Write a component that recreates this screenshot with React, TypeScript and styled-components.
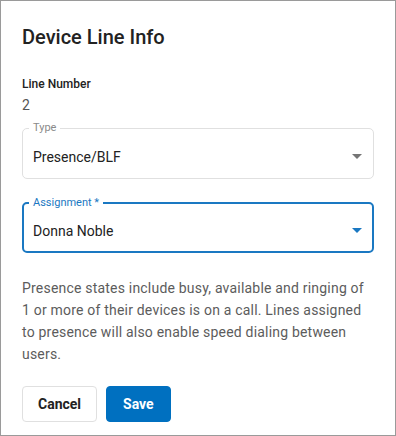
import React from 'react';
import styled, {createGlobalStyle} from "styled-components";

const GlobalStyle = createGlobalStyle`
  * {
    box-sizing: border-box;
  }
  body {
    margin: 0;
    font-family: Roboto, "Liberation Sans", sans-serif;
    background: #fff;
  }
`

const Caret = ({color}: {color: string}) => (
    <svg width="10" height="5" viewBox="0 0 10 5">
        <path d="M0 0 L10 0 L5 5 Z" fill={color}/>
    </svg>
);

type SelectProps = {
    label: string;
    value: string;
    focused?: boolean;
}

const SelectField = ({label, value, focused}: SelectProps) => {
    return (
        <Field $focused={focused}>
            <FieldLabel $focused={focused}>{label}</FieldLabel>
            <FieldValue>{value}</FieldValue>
            <Caret color={focused ? "#1a78c2" : "#757575"}/>
        </Field>
    );
};

export default function App() {
    return (
        <>
            <GlobalStyle/>
            <Dialog>
                <Title>Device Line Info</Title>
                <InfoLabel>Line Number</InfoLabel>
                <InfoValue>2</InfoValue>
                <Fields>
                    <SelectField label="Type" value="Presence/BLF"/>
                    <SelectField label="Assignment *" value="Donna Noble" focused/>
                </Fields>
                <Description>
                    Presence states include busy, available and ringing of 1 or more of their devices is on a call.
                    Lines assigned to presence will also enable speed dialing between users.
                </Description>
                <Actions>
                    <Button>Cancel</Button>
                    <Button $primary>Save</Button>
                </Actions>
            </Dialog>
        </>
    );
}

const Dialog = styled.div`
  width: 396px;
  height: 436px;
  border: 1px solid #9a9a9a;
  padding: 24px 21px 0;
  display: flex;
  flex-direction: column;
  background: #fff;
`

const Title = styled.h2`
  margin: 0;
  font-size: 20px;
  line-height: 24px;
  font-weight: 500;
  color: #222;
`

const InfoLabel = styled.div`
  margin-top: 27px;
  font-size: 12px;
  line-height: 16px;
  font-weight: 500;
  color: #222;
`

const InfoValue = styled.div`
  margin-top: 3px;
  font-size: 14px;
  line-height: 20px;
  color: #555;
`

const Fields = styled.div`
  margin-top: 13px;
  display: flex;
  flex-direction: column;
  gap: 23px;
`

const Field = styled.div<{ $focused?: boolean }>`
  position: relative;
  height: 51px;
  border: ${p => p.$focused ? "2px solid #1a78c2" : "1px solid #e0e0e0"};
  border-radius: 5px;
  display: flex;
  align-items: center;
  padding: ${p => p.$focused ? "6px 10px 0 9px" : "6px 11px 0 10px"};
`

const FieldLabel = styled.span<{ $focused?: boolean }>`
  position: absolute;
  top: -8px;
  left: ${p => p.$focused ? "5px" : "6px"};
  padding: 0 4px;
  background: #fff;
  font-size: 11px;
  line-height: 14px;
  color: ${p => p.$focused ? "#1a78c2" : "#8a8a8a"};
`

const FieldValue = styled.span`
  flex: 1;
  font-size: 14px;
  line-height: 20px;
  color: #222;
`

const Description = styled.p`
  margin: 24px 0 0;
  font-size: 14px;
  line-height: 22px;
  letter-spacing: 0.2px;
  color: #5c5c5c;
`

const Actions = styled.div`
  margin-top: 21px;
  display: flex;
  gap: 9px;
`

const Button = styled.button<{ $primary?: boolean }>`
  height: 36px;
  padding: 0 ${p => p.$primary ? "16px" : "15px"};
  border-radius: 4px;
  border: 1px solid ${p => p.$primary ? "#0070c0" : "#e0e0e0"};
  background: ${p => p.$primary ? "#0070c0" : "#fff"};
  color: ${p => p.$primary ? "#fff" : "#222"};
  font-family: Roboto, "Liberation Sans", sans-serif;
  font-size: 14px;
  font-weight: 700;
  cursor: pointer;
`
